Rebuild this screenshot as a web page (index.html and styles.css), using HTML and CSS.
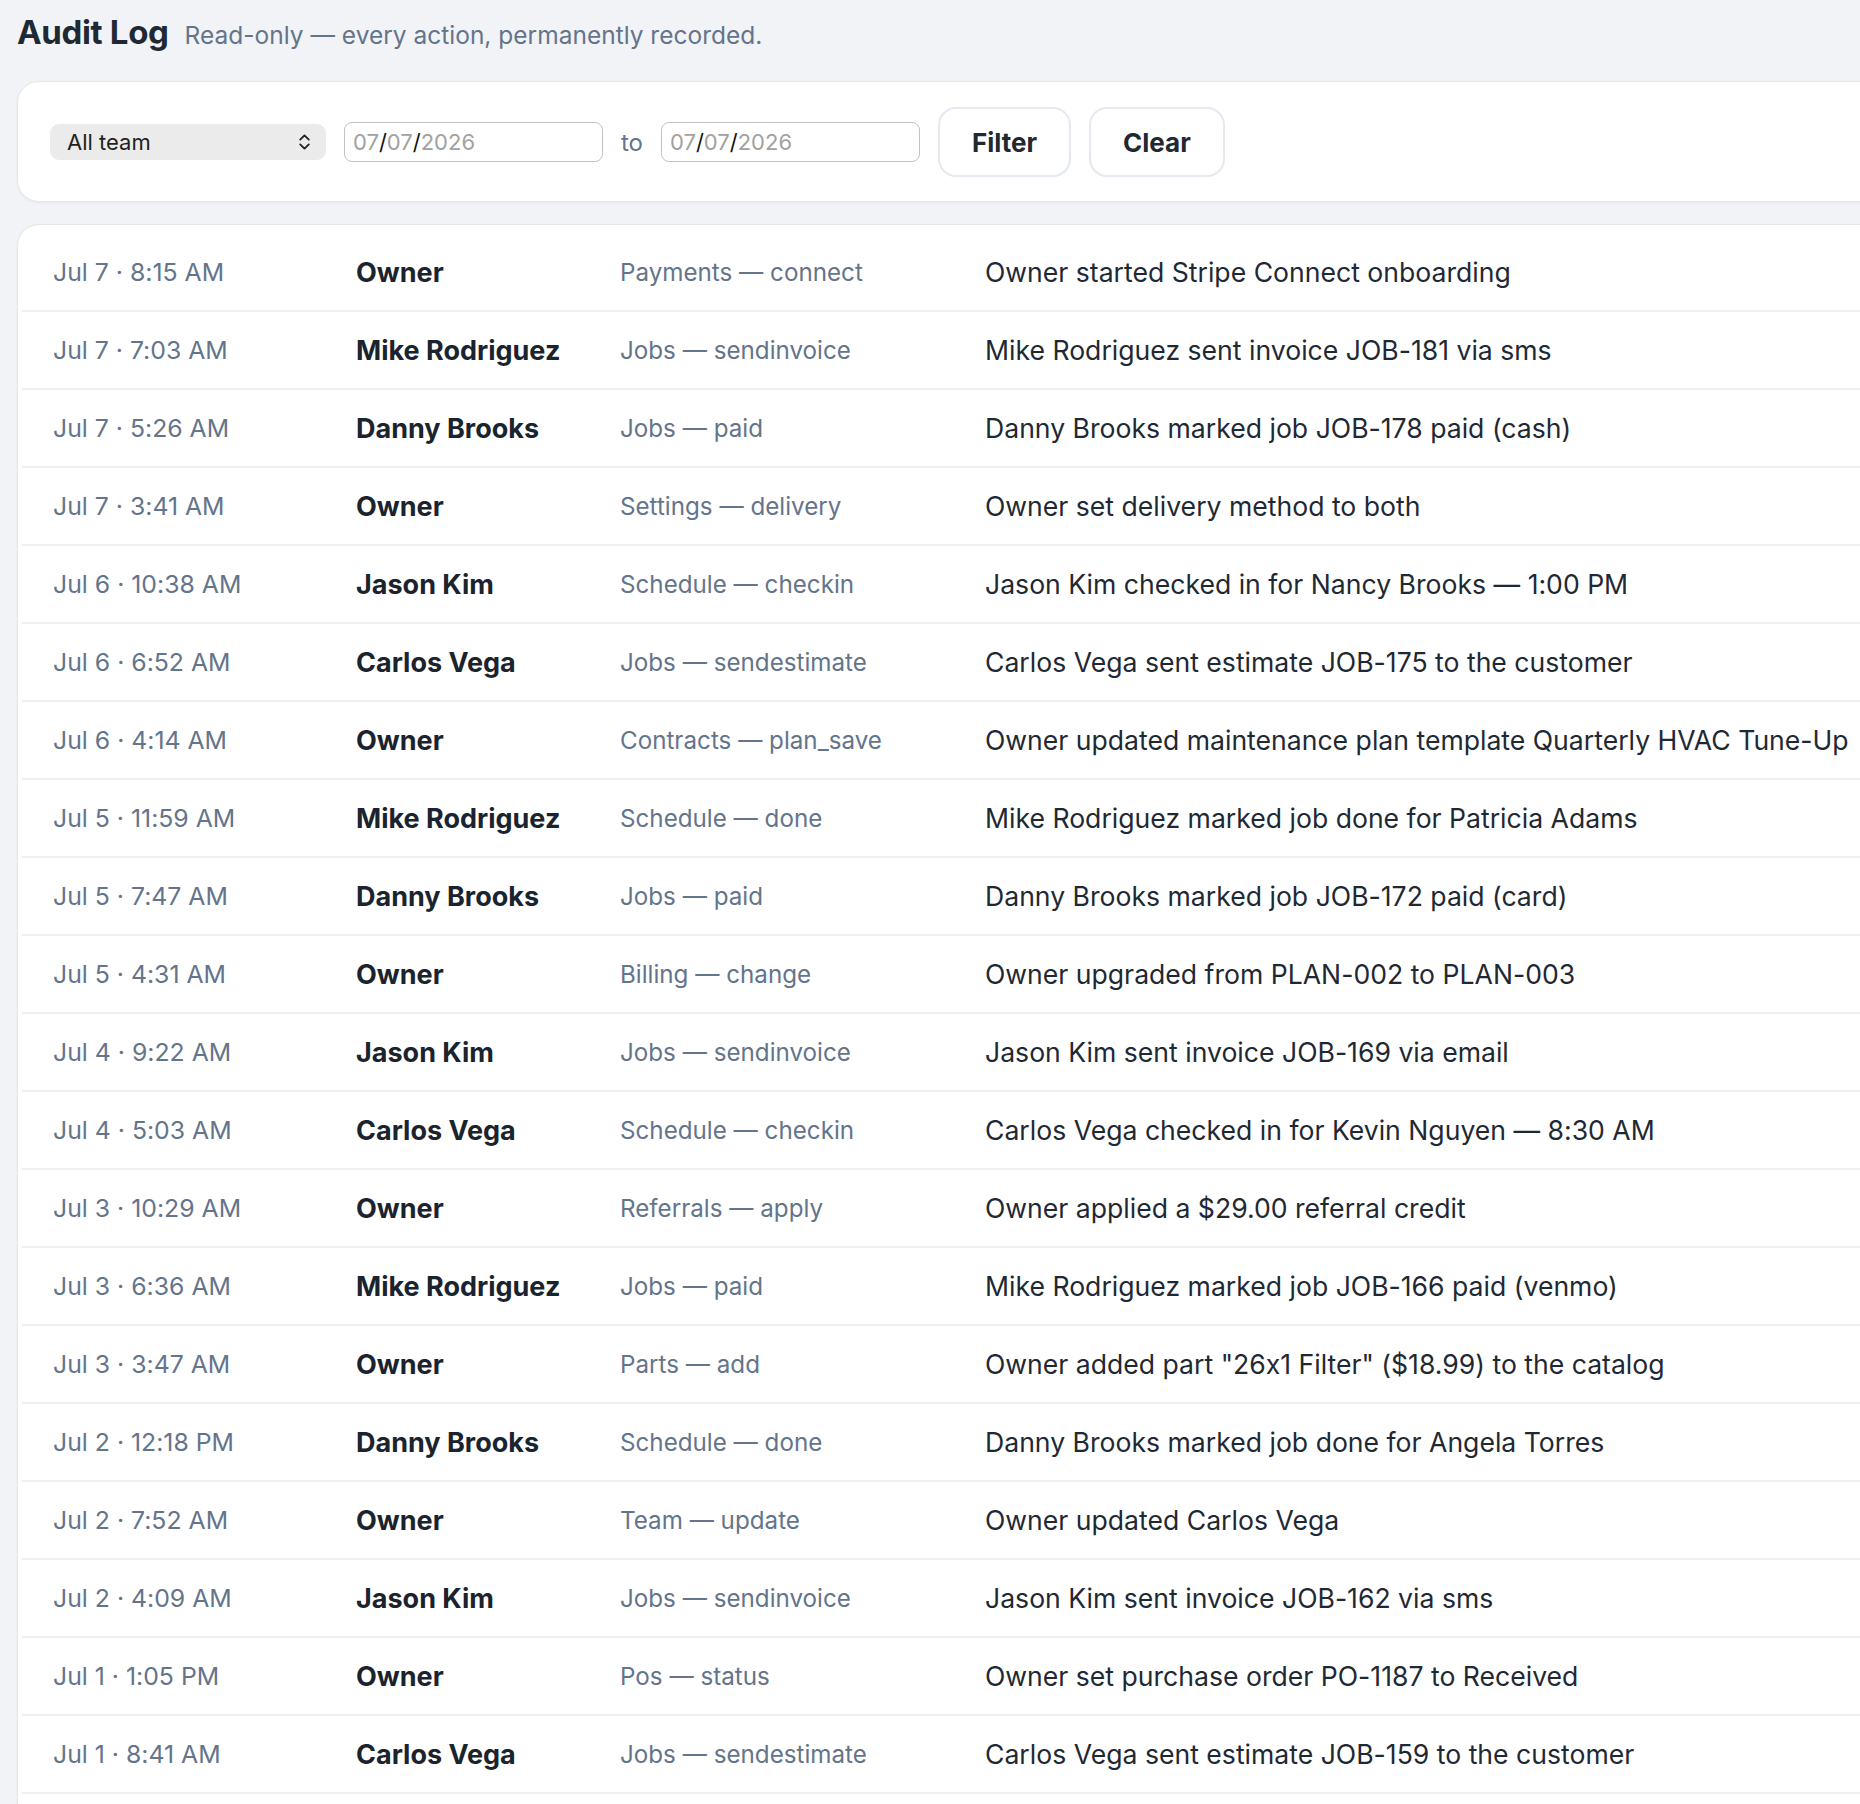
FILE: index.html
```html
<!DOCTYPE html>
<html lang="en">
<head>
<meta charset="utf-8">
<title>Audit Log</title>
<link rel="stylesheet" href="styles.css">
</head>
<body>
<main class="page">
  <header class="page-head">
    <h1 class="page-title">Audit Log</h1>
    <p class="page-sub">Read-only — every action, permanently recorded.</p>
  </header>

  <section class="card filters">
    <div class="select">
      <span>All team</span>
      <svg class="select-caret" width="13" height="18" viewBox="0 0 13 18" aria-hidden="true">
        <path d="M2.2 6.6 L6.5 2.4 L10.8 6.6" fill="none" stroke="#1f1f1f" stroke-width="1.8" stroke-linecap="round" stroke-linejoin="round"/>
        <path d="M2.2 11.4 L6.5 15.6 L10.8 11.4" fill="none" stroke="#1f1f1f" stroke-width="1.8" stroke-linecap="round" stroke-linejoin="round"/>
      </svg>
    </div>
    <div class="date-input"><span class="d">07</span><span class="s">/</span><span class="d">07</span><span class="s">/</span><span class="d">2026</span></div>
    <span class="to">to</span>
    <div class="date-input"><span class="d">07</span><span class="s">/</span><span class="d">07</span><span class="s">/</span><span class="d">2026</span></div>
    <button class="btn">Filter</button>
    <button class="btn">Clear</button>
  </section>

  <section class="card log">
    <div class="row"><span class="when">Jul 7 · 8:15 AM</span><span class="who">Owner</span><span class="what">Payments — connect</span><span class="desc">Owner started Stripe Connect onboarding</span></div>
    <div class="row"><span class="when">Jul 7 · 7:03 AM</span><span class="who">Mike Rodriguez</span><span class="what">Jobs — sendinvoice</span><span class="desc">Mike Rodriguez sent invoice JOB-181 via sms</span></div>
    <div class="row"><span class="when">Jul 7 · 5:26 AM</span><span class="who">Danny Brooks</span><span class="what">Jobs — paid</span><span class="desc">Danny Brooks marked job JOB-178 paid (cash)</span></div>
    <div class="row"><span class="when">Jul 7 · 3:41 AM</span><span class="who">Owner</span><span class="what">Settings — delivery</span><span class="desc">Owner set delivery method to both</span></div>
    <div class="row"><span class="when">Jul 6 · 10:38 AM</span><span class="who">Jason Kim</span><span class="what">Schedule — checkin</span><span class="desc">Jason Kim checked in for Nancy Brooks — 1:00 PM</span></div>
    <div class="row"><span class="when">Jul 6 · 6:52 AM</span><span class="who">Carlos Vega</span><span class="what">Jobs — sendestimate</span><span class="desc">Carlos Vega sent estimate JOB-175 to the customer</span></div>
    <div class="row"><span class="when">Jul 6 · 4:14 AM</span><span class="who">Owner</span><span class="what">Contracts — plan_save</span><span class="desc">Owner updated maintenance plan template Quarterly HVAC Tune-Up</span></div>
    <div class="row"><span class="when">Jul 5 · 11:59 AM</span><span class="who">Mike Rodriguez</span><span class="what">Schedule — done</span><span class="desc">Mike Rodriguez marked job done for Patricia Adams</span></div>
    <div class="row"><span class="when">Jul 5 · 7:47 AM</span><span class="who">Danny Brooks</span><span class="what">Jobs — paid</span><span class="desc">Danny Brooks marked job JOB-172 paid (card)</span></div>
    <div class="row"><span class="when">Jul 5 · 4:31 AM</span><span class="who">Owner</span><span class="what">Billing — change</span><span class="desc">Owner upgraded from PLAN-002 to PLAN-003</span></div>
    <div class="row"><span class="when">Jul 4 · 9:22 AM</span><span class="who">Jason Kim</span><span class="what">Jobs — sendinvoice</span><span class="desc">Jason Kim sent invoice JOB-169 via email</span></div>
    <div class="row"><span class="when">Jul 4 · 5:03 AM</span><span class="who">Carlos Vega</span><span class="what">Schedule — checkin</span><span class="desc">Carlos Vega checked in for Kevin Nguyen — 8:30 AM</span></div>
    <div class="row"><span class="when">Jul 3 · 10:29 AM</span><span class="who">Owner</span><span class="what">Referrals — apply</span><span class="desc">Owner applied a $29.00 referral credit</span></div>
    <div class="row"><span class="when">Jul 3 · 6:36 AM</span><span class="who">Mike Rodriguez</span><span class="what">Jobs — paid</span><span class="desc">Mike Rodriguez marked job JOB-166 paid (venmo)</span></div>
    <div class="row"><span class="when">Jul 3 · 3:47 AM</span><span class="who">Owner</span><span class="what">Parts — add</span><span class="desc">Owner added part "26x1 Filter" ($18.99) to the catalog</span></div>
    <div class="row"><span class="when">Jul 2 · 12:18 PM</span><span class="who">Danny Brooks</span><span class="what">Schedule — done</span><span class="desc">Danny Brooks marked job done for Angela Torres</span></div>
    <div class="row"><span class="when">Jul 2 · 7:52 AM</span><span class="who">Owner</span><span class="what">Team — update</span><span class="desc">Owner updated Carlos Vega</span></div>
    <div class="row"><span class="when">Jul 2 · 4:09 AM</span><span class="who">Jason Kim</span><span class="what">Jobs — sendinvoice</span><span class="desc">Jason Kim sent invoice JOB-162 via sms</span></div>
    <div class="row"><span class="when">Jul 1 · 1:05 PM</span><span class="who">Owner</span><span class="what">Pos — status</span><span class="desc">Owner set purchase order PO-1187 to Received</span></div>
    <div class="row"><span class="when">Jul 1 · 8:41 AM</span><span class="who">Carlos Vega</span><span class="what">Jobs — sendestimate</span><span class="desc">Carlos Vega sent estimate JOB-159 to the customer</span></div>
  </section>
</main>
</body>
</html>
```

FILE: styles.css
```css
html, body {
  margin: 0;
  padding: 0;
  overflow: hidden;
}

body {
  background: #f1f3f6;
  font-family: Inter, "Noto Sans", "Liberation Sans", sans-serif;
  font-feature-settings: "calt" 0;
  color: #1f2937;
}

.page {
  width: 2100px;
  padding: 13px 0 0 17px;
}

/* ---- header ---- */
.page-head {
  display: flex;
  align-items: baseline;
  gap: 16px;
  height: 38px;
  line-height: 38px;
}

.page-title {
  margin: 0;
  font-size: 33px;
  font-weight: 700;
  letter-spacing: -0.01em;
  color: #1e2933;
}

.page-sub {
  margin: 0;
  font-size: 24.5px;
  color: #64748b;
}

/* ---- cards ---- */
.card {
  background: #ffffff;
  border: 1px solid #e5e7eb;
  border-radius: 22px;
  box-shadow: 0 1px 3px rgba(15, 23, 42, 0.05);
}

.filters {
  margin-top: 30px;
  display: flex;
  align-items: center;
  gap: 18px;
  padding: 25px 32px 24px;
}

.select {
  width: 276px;
  height: 36px;
  box-sizing: border-box;
  padding: 0 15px 0 17px;
  display: flex;
  align-items: center;
  justify-content: space-between;
  background: #ebebeb;
  border-radius: 9px;
  font-size: 22px;
  color: #1f1f1f;
}

.select-caret {
  display: block;
}

.date-input {
  width: 259px;
  height: 40px;
  box-sizing: border-box;
  padding: 0 8px;
  display: flex;
  align-items: center;
  border: 1px solid #c2c2c2;
  border-radius: 8px;
  font-size: 22px;
}

.date-input .d {
  color: #a1a1a1;
}

.date-input .s {
  color: #111111;
}

.to {
  font-size: 24px;
  color: #64748b;
}

.btn {
  height: 70px;
  padding: 0 32px;
  background: #ffffff;
  border: 2px solid #e5e9f0;
  border-radius: 18px;
  font-family: inherit;
  font-size: 26px;
  font-weight: 700;
  color: #1e2933;
}

/* ---- log list ---- */
.log {
  margin-top: 22px;
  padding: 9px 4px 40px;
}

.row {
  display: grid;
  grid-template-columns: 303px 264px 365px 1fr;
  align-items: center;
  height: 78px;
  box-sizing: border-box;
  padding-left: 31px;
  border-bottom: 2px solid #eef0f4;
}

.when {
  font-size: 24.8px;
  color: #64748b;
}

.who {
  font-size: 27px;
  font-weight: 700;
  color: #1a232e;
}

.what {
  font-size: 24.2px;
  color: #64748b;
}

.desc {
  font-size: 26.6px;
  color: #1f2933;
  white-space: nowrap;
}
```
